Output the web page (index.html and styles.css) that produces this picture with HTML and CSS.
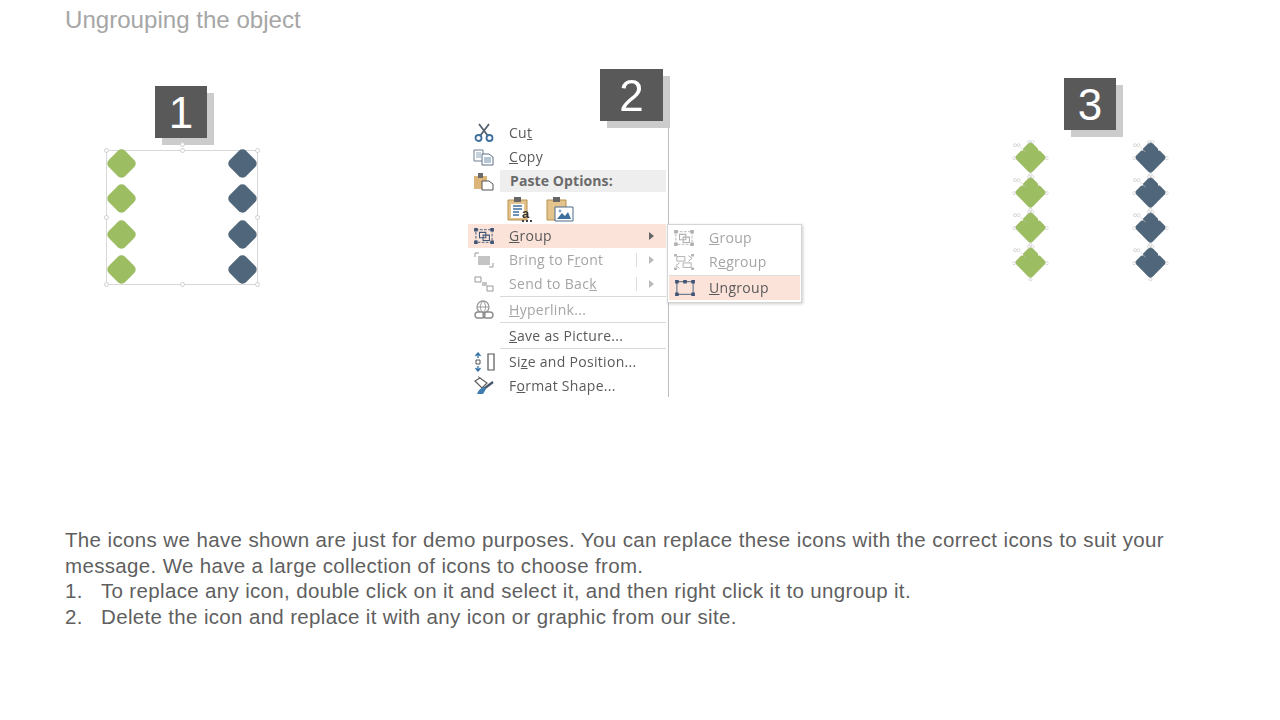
FILE: index.html
```html
<!DOCTYPE html>
<html>
<head>
    <meta charset="UTF-8">
    <title>Ungrouping the object</title>
    <link rel="stylesheet" href="styles.css">
</head>
<body>
    <svg class="defs" width="0" height="0">
        <symbol id="group-icon" viewBox="0 0 24 20">
            <path d="M3 3h18v14H3z" fill="none" stroke="currentColor" stroke-width="1" stroke-dasharray="3 1.5"/>
            <path d="M7 6h7v6H7z M11 9h7v6h-7z" fill="none" stroke="currentColor" stroke-width="1.2"/>
            <path d="M1 1h4v4H1z M19 1h4v4h-4z M1 15h4v4H1z M19 15h4v4h-4z" fill="currentColor"/>
        </symbol>
        <symbol id="regroup-icon" viewBox="0 0 24 20">
            <path d="M4 4h9v5H4z M11 11h9v5h-9z" fill="none" stroke="currentColor" stroke-width="1.1"/>
            <path d="M17 3l4 3-4 3 M7 11l-4 3 4 3" fill="none" stroke="currentColor" stroke-width="1.1"/>
            <path d="M1 1h3v3H1z M20 1h3v3h-3z M1 16h3v3H1z M20 16h3v3h-3z" fill="currentColor"/>
        </symbol>
        <symbol id="handles" viewBox="0 0 36 36">
            <path d="M8 7l5 5" stroke="#c4c4c4" stroke-width="0.7" fill="none"/>
            <g fill="#fff" stroke="#c9c9c9" stroke-width="0.7">
                <circle cx="2.500" cy="5" r="1.500"/>
                <circle cx="6" cy="5" r="1.500"/>
                <circle cx="16.500" cy="1.500" r="1.400"/>
                <circle cx="20" cy="1.500" r="1.400"/>
                <circle cx="18" cy="34.500" r="1.500"/>
                <circle cx="1.500" cy="18" r="1.500"/>
                <circle cx="34.500" cy="18" r="1.500"/>
            </g>
            <g fill="#fff">
                <circle cx="9.500" cy="9.500" r="1"/>
                <circle cx="26.500" cy="9.500" r="1"/>
                <circle cx="9.500" cy="26.500" r="1"/>
                <circle cx="26.500" cy="26.500" r="1"/>
            </g>
        </symbol>
    </svg>

    <h1 class="title">Ungrouping the object</h1>

    <div class="figures">
        <!-- step 1 -->
        <div class="badge badge-one">1</div>
        <div class="selection">
            <span class="handle h-tl"></span><span class="handle h-tc"></span><span class="handle h-tr"></span>
            <span class="handle h-ml"></span><span class="handle h-mr"></span>
            <span class="handle h-bl"></span><span class="handle h-bc"></span><span class="handle h-br"></span>
            <span class="handle h-rot"></span>
            <div class="shape-col">
                <span class="diamond green"></span>
                <span class="diamond green"></span>
                <span class="diamond green"></span>
                <span class="diamond green"></span>
            </div>
            <div class="shape-col">
                <span class="diamond slate"></span>
                <span class="diamond slate"></span>
                <span class="diamond slate"></span>
                <span class="diamond slate"></span>
            </div>
        </div>

        <!-- step 2 -->
        <div class="badge badge-two">2</div>
        <div class="menu">
            <div class="row">
                <span class="ico">
                    <svg width="22" height="20" viewBox="0 0 22 20"><path d="M6 1l9 12 M16 1L7 13" stroke="#54616e" stroke-width="1.800" fill="none"/><circle cx="5.500" cy="15" r="3" fill="none" stroke="#3f6f9f" stroke-width="1.800"/><circle cx="16.500" cy="15" r="3" fill="none" stroke="#3f6f9f" stroke-width="1.800"/></svg>
                </span>
                <span>Cu<u>t</u></span>
            </div>
            <div class="row">
                <span class="ico">
                    <svg width="22" height="20" viewBox="0 0 22 20"><path d="M1 3h9v11H1z" fill="#fff" stroke="#6d7f92"/><path d="M3 6h5M3 8h5M3 10h5" stroke="#8fa3b8"/><path d="M9 7h7l4 3v8H9z" fill="#fff" stroke="#5a6f86"/><path d="M11 11h7M11 13h7M11 15h7" stroke="#6f8dab"/></svg>
                </span>
                <span><u>C</u>opy</span>
            </div>
            <div class="row">
                <span class="ico">
                    <svg width="22" height="20" viewBox="0 0 22 20"><path d="M1 5h13v13H1z" fill="#dcb678"/><path d="M5 2h5v5H5z" fill="#6b6b6b"/><path d="M9 10h7l4 3v6H9z" fill="#fff" stroke="#555"/></svg>
                </span>
                <span class="paste-head">Paste Options:</span>
            </div>
            <div class="row paste-icons">
                <svg width="28" height="26" viewBox="0 0 28 26">
                    <path d="M1 4h19v20H1z" fill="#e3c48d" stroke="#b98f4e"/>
                    <path d="M7 1h7v5H7z" fill="#666"/>
                    <path d="M4 8h13v14H4z" fill="#fff"/>
                    <path d="M6 10h9M6 13h9M6 16h6M6 19h6" stroke="#3e6f9c" stroke-width="1.300"/>
                    <text x="15" y="22" class="paste-a">a</text>
                    <path d="M15 24h2v2h-2zM19 24h2v2h-2zM23 24h2v2h-2z" fill="#444"/>
                </svg>
                <svg width="28" height="26" viewBox="0 0 28 26">
                    <path d="M1 4h19v20H1z" fill="#e3c48d" stroke="#b98f4e"/>
                    <path d="M7 1h7v5H7z" fill="#666"/>
                    <path d="M9 11h18v14H9z" fill="#fff" stroke="#4d6a88"/>
                    <path d="M11 23l5-6 3 3 3-4 3 7z" fill="#3e6f9c"/>
                    <circle cx="14" cy="15" r="1.400" fill="#7da6cc"/>
                </svg>
            </div>
            <div class="row active">
                <span class="ico dark-ico"><svg width="22" height="18"><use href="#group-icon"/></svg></span>
                <span><u>G</u>roup</span>
                <span class="arrow"></span>
            </div>
            <div class="row off">
                <span class="ico">
                    <svg width="22" height="18" viewBox="0 0 22 18"><path d="M2 6V2h4 M20 12v4h-4" fill="none" stroke="#999"/><path d="M5 5h12v9H5z" fill="#c4c4c4"/></svg>
                </span>
                <span>Bring to F<u>r</u>ont</span>
                <span class="split"></span>
                <span class="arrow"></span>
            </div>
            <div class="row off">
                <span class="ico">
                    <svg width="22" height="18" viewBox="0 0 22 18"><path d="M2 2h6v5H2z M14 11h6v5h-6z" fill="#fff" stroke="#999"/><path d="M9 7h5v4H9z" fill="#c4c4c4"/></svg>
                </span>
                <span>Send to Bac<u>k</u></span>
                <span class="split"></span>
                <span class="arrow"></span>
            </div>
            <div class="sep"></div>
            <div class="row tall off">
                <span class="ico">
                    <svg width="22" height="20" viewBox="0 0 22 20"><circle cx="10" cy="7" r="6" fill="none" stroke="#9a9a9a" stroke-width="1.300"/><path d="M4 7h12M10 1c-3.500 3.500-3.500 8.500 0 12M10 1c3.500 3.500 3.500 8.500 0 12" fill="none" stroke="#9a9a9a"/><rect x="2" y="12" width="10" height="6" rx="3" fill="#fff" stroke="#8c8c8c" stroke-width="1.400"/><rect x="10" y="12" width="10" height="6" rx="3" fill="none" stroke="#8c8c8c" stroke-width="1.400"/></svg>
                </span>
                <span><u>H</u>yperlink...</span>
            </div>
            <div class="sep"></div>
            <div class="row tall">
                <span class="ico"></span>
                <span><u>S</u>ave as Picture...</span>
            </div>
            <div class="sep"></div>
            <div class="row tall">
                <span class="ico">
                    <svg width="22" height="20" viewBox="0 0 22 20"><path d="M5 6V1M2.500 4L5 1l2.500 3 M5 14v5M2.500 16L5 19l2.500-3" fill="none" stroke="#2f6ea5" stroke-width="1.300"/><path d="M3 8h4v4H3z" fill="none" stroke="#555"/><path d="M15 2h6v16h-6z" fill="none" stroke="#555" stroke-width="1.200"/></svg>
                </span>
                <span>Si<u>z</u>e and Position...</span>
            </div>
            <div class="row">
                <span class="ico">
                    <svg width="22" height="20" viewBox="0 0 22 20"><path d="M2 5l5-3 7 5-5 5z" fill="#fff" stroke="#5f5f5f" stroke-width="1.200"/><path d="M7 2L5 0.500" stroke="#5f5f5f"/><path d="M4 18c2-5 5-7 8-7l1 2-3 5z" fill="#3e7cb1"/><path d="M12 12l8-6" stroke="#44546a" stroke-width="2.200"/></svg>
                </span>
                <span>F<u>o</u>rmat Shape...</span>
            </div>
        </div>

        <div class="submenu">
            <div class="sub-row off">
                <span class="sub-ico"><svg width="22" height="18"><use href="#group-icon"/></svg></span>
                <span><u>G</u>roup</span>
            </div>
            <div class="sub-row off">
                <span class="sub-ico"><svg width="22" height="18"><use href="#regroup-icon"/></svg></span>
                <span>R<u>e</u>group</span>
            </div>
            <div class="sub-row active">
                <span class="sub-ico dark-ico">
                    <svg width="22" height="18" viewBox="0 0 24 20"><path d="M3 3h18v14H3z" fill="none" stroke="currentColor"/><path d="M1 1h4v4H1z M19 1h4v4h-4z M1 15h4v4H1z M19 15h4v4h-4z M10 1h4v4h-4z" fill="currentColor"/></svg>
                </span>
                <span><u>U</u>ngroup</span>
            </div>
        </div>

        <!-- step 3 -->
        <div class="badge badge-three">3</div>
        <div class="edit-points">
            <div class="shape-col">
                <span class="diamond green points"><svg width="36" height="36"><use href="#handles"/></svg></span>
                <span class="diamond green points"><svg width="36" height="36"><use href="#handles"/></svg></span>
                <span class="diamond green points"><svg width="36" height="36"><use href="#handles"/></svg></span>
                <span class="diamond green points"><svg width="36" height="36"><use href="#handles"/></svg></span>
            </div>
            <div class="shape-col">
                <span class="diamond slate points"><svg width="36" height="36"><use href="#handles"/></svg></span>
                <span class="diamond slate points"><svg width="36" height="36"><use href="#handles"/></svg></span>
                <span class="diamond slate points"><svg width="36" height="36"><use href="#handles"/></svg></span>
                <span class="diamond slate points"><svg width="36" height="36"><use href="#handles"/></svg></span>
            </div>
        </div>
    </div>

    <div class="notes">
        <p class="lead">The icons we have shown are just for demo purposes. You can replace these icons with the correct icons to suit your message. We have a large collection of icons to choose from.</p>
        <ol>
            <li>To replace any icon, double click on it and select it, and then right click it to ungroup it.</li>
            <li>Delete the icon and replace it with any icon or graphic from our site.</li>
        </ol>
    </div>
</body>
</html>
```

FILE: styles.css
```css
body {
    margin: 0;
    height: 720px;
    overflow: hidden;
    background: #fff;
    font-family: "Liberation Sans", Arial, sans-serif;
    color: #595959;
}

.defs {
    position: absolute;
}

.title {
    margin: 0;
    padding: 6px 0 0 65px;
    height: 34px;
    font-size: 24.100px;
    line-height: 28px;
    font-weight: 400;
    color: #a6a6a6;
}

/* slide canvas */
.figures {
    position: relative;
    height: 487px;
}

.badge {
    position: absolute;
    width: 52px;
    height: 52px;
    background: #595959;
    box-shadow: 7px 7px 0 #cccccc;
    color: #fff;
    font-size: 44px;
    line-height: 53px;
    text-align: center;
}

.badge-one {
    left: 155px;
    top: 46px;
}

.badge-two {
    left: 600px;
    top: 29px;
    width: 63px;
    z-index: 1;
}

.badge-three {
    left: 1064px;
    top: 38px;
}

/* diamonds */
.shape-col {
    display: flex;
    flex-direction: column;
    gap: 12.300px;
}

.diamond {
    display: block;
    position: relative;
    width: 23px;
    height: 23px;
    border-radius: 5px;
    transform: rotate(45deg);
}

.diamond.points {
    border-radius: 3px;
}

.green {
    background: #9dbd63;
}

.slate {
    background: #50667a;
}

.selection {
    position: absolute;
    left: 106px;
    top: 110px;
    width: 143.500px;
    height: 132px;
    padding: 1px 3px 0;
    border: 1px solid #d8d8d8;
    display: flex;
    justify-content: space-between;
}

.handle {
    position: absolute;
    width: 3px;
    height: 3px;
    border: 1px solid #d0d0d0;
    border-radius: 50%;
    background: #fff;
}

.h-tl { left: -3px; top: -3px; }
.h-tc { left: 73px; top: -3px; }
.h-tr { right: -3px; top: -3px; }
.h-ml { left: -3px; top: 64px; }
.h-mr { right: -3px; top: 64px; }
.h-bl { left: -3px; bottom: -3px; }
.h-bc { left: 73px; bottom: -3px; }
.h-br { right: -3px; bottom: -3px; }
.h-rot { left: 73px; top: -9px; }

.edit-points {
    position: absolute;
    left: 1018.500px;
    top: 105.500px;
    width: 143px;
    display: flex;
    justify-content: space-between;
}

.points svg {
    position: absolute;
    left: -6.500px;
    top: -6.500px;
    transform: rotate(-45deg);
}

/* context menu */
.menu {
    position: absolute;
    left: 468px;
    top: 81px;
    width: 198px;
    height: 276px;
    padding-right: 2px;
    border-right: 1px solid #bdbdbd;
    font-family: "Open Sans", sans-serif;
    font-size: 14px;
    letter-spacing: 0.300px;
    color: #5a5a5a;
    overflow: hidden;
    filter: blur(0.300px);
}

/* text sits 1px above the centre of each row, icons stay centred */
.row {
    display: flex;
    align-items: center;
    box-sizing: border-box;
    height: 24px;
    padding-bottom: 2px;
    position: relative;
}

.row.tall {
    height: 25px;
    padding-bottom: 1px;
}

.ico {
    display: flex;
    justify-content: center;
    width: 31px;
    margin: 2px 10px 0 0;
    flex: none;
}

.tall .ico {
    margin-top: 1px;
}

.dark-ico {
    color: #3f5573;
}

.off {
    color: #a5a5a5;
}

.off .ico svg,
.off .sub-ico svg {
    color: #b0b0b0;
}

.active {
    background: #fbe3da;
}

.arrow {
    position: absolute;
    left: 181px;
    width: 0;
    height: 0;
    margin-top: 2px;
    border-left: 5px solid #666;
    border-top: 4px solid transparent;
    border-bottom: 4px solid transparent;
}

.off .arrow {
    border-left-color: #bbb;
}

.split {
    position: absolute;
    left: 168px;
    width: 1px;
    height: 14px;
    margin-top: 2px;
    background: #ddd;
}

.paste-head {
    flex: 1;
    margin: 2px 0 0 -9px;
    padding-left: 10px;
    height: 22px;
    line-height: 21px;
    background: #eeeeee;
    font-weight: 700;
    letter-spacing: 0.100px;
    color: #6a6a6a;
}

.row.paste-icons {
    height: 31px;
    padding: 0 0 0 39px;
    gap: 11px;
}

.paste-a {
    font-family: "Liberation Sans", sans-serif;
    font-size: 13px;
    font-weight: 700;
    fill: #333;
}

.sep {
    height: 1px;
    margin-left: 32px;
    background: #d9d9d9;
}

.submenu {
    position: absolute;
    left: 667px;
    top: 184px;
    width: 133px;
    height: 76px;
    padding-top: 1px;
    background: #fff;
    border: 1px solid #d4d4d4;
    box-shadow: 1px 1px 3px rgba(0, 0, 0, 0.2);
    font-family: "Open Sans", sans-serif;
    font-size: 14px;
    letter-spacing: 0.300px;
    color: #5a5a5a;
    filter: blur(0.300px);
}

.sub-row {
    display: flex;
    align-items: center;
    box-sizing: border-box;
    height: 24px;
    padding-bottom: 2px;
}

.sub-row.active {
    height: 25px;
    margin: 1px 1px 0;
    border-top: 1px solid #ddd;
}

.sub-ico {
    display: flex;
    justify-content: center;
    width: 32px;
    margin: 2px 9px 0 0;
    flex: none;
}

.sub-row.active .sub-ico {
    margin-right: 8px;
}

/* bottom text */
.notes {
    padding: 0 116px 0 65px;
    font-size: 20.500px;
    letter-spacing: 0.340px;
    line-height: 25.600px;
    color: #5f5f5f;
}

.lead {
    margin: 0;
    text-align: justify;
}

.notes ol {
    margin: 0;
    padding: 0;
    list-style: none;
    counter-reset: step;
}

.notes li {
    display: flex;
    counter-increment: step;
}

.notes li::before {
    content: counter(step) ".";
    width: 36px;
    flex: none;
}
```
